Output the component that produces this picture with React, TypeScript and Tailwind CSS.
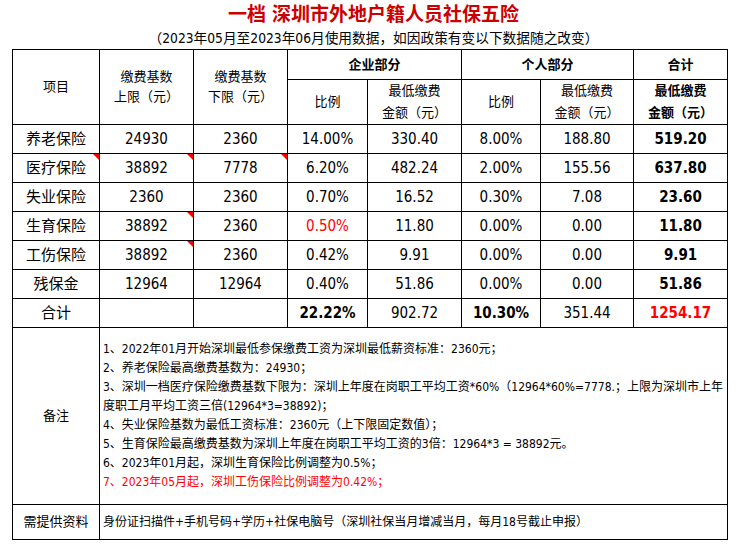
import React from "react";

const font = "font-['DejaVu_Sans_Condensed','Liberation_Sans','Noto_Sans_CJK_SC',sans-serif]";

type Row = {
  name: string;
  upper: string;
  lower: string;
  coRate: string;
  coAmt: string;
  pRate: string;
  pAmt: string;
  total: string;
  marks?: number[];
  redRate?: boolean;
};

const rows: Row[] = [
  { name: "养老保险", upper: "24930", lower: "2360", coRate: "14.00%", coAmt: "330.40", pRate: "8.00%", pAmt: "188.80", total: "519.20" },
  { name: "医疗保险", upper: "38892", lower: "7778", coRate: "6.20%", coAmt: "482.24", pRate: "2.00%", pAmt: "155.56", total: "637.80", marks: [0, 1, 2] },
  { name: "失业保险", upper: "2360", lower: "2360", coRate: "0.70%", coAmt: "16.52", pRate: "0.30%", pAmt: "7.08", total: "23.60" },
  { name: "生育保险", upper: "38892", lower: "2360", coRate: "0.50%", coAmt: "11.80", pRate: "0.00%", pAmt: "0.00", total: "11.80", marks: [1], redRate: true },
  { name: "工伤保险", upper: "38892", lower: "2360", coRate: "0.42%", coAmt: "9.91", pRate: "0.00%", pAmt: "0.00", total: "9.91", marks: [1] },
  { name: "残保金", upper: "12964", lower: "12964", coRate: "0.40%", coAmt: "51.86", pRate: "0.00%", pAmt: "0.00", total: "51.86" },
];

const notes = [
  "1、2022年01月开始深圳最低参保缴费工资为深圳最低薪资标准：2360元；",
  "2、养老保险最高缴费基数为：24930；",
  "3、深圳一档医疗保险缴费基数下限为：深圳上年度在岗职工平均工资*60%（12964*60%=7778.；上限为深圳市上年度职工月平均工资三倍(12964*3=38892)；",
  "4、失业保险基数为最低工资标准：2360元（上下限固定数值）；",
  "5、生育保险最高缴费基数为深圳上年度在岗职工平均工资的3倍：12964*3 = 38892元。",
  "6、2023年01月起，深圳生育保险比例调整为0.5%；",
];

function Mark() {
  return (
    <span className="absolute right-0 top-0 w-0 h-0 border-t-[6px] border-t-[#ff0000] border-l-[6px] border-l-transparent" />
  );
}

const td = "border border-black text-center relative p-0";

export default function App() {
  return (
    <div className={`bg-white w-[747px] h-[549px] text-black ${font}`}>
      <h1 className="mt-[2px] h-[24px] leading-[24px] text-center text-[19px] font-bold text-[#cc0000]">
        一档 深圳市外地户籍人员社保五险
      </h1>
      <p className="mt-[2px] h-[20px] leading-[20px] text-center text-[13.7px]">
        （2023年05月至2023年06月使用数据，如因政策有变以下数据随之改变）
      </p>
      <table className="ml-[12px] mt-[1px] w-[715px] table-fixed border-collapse">
        <colgroup>
          <col className="w-[87px]" />
          <col className="w-[94px]" />
          <col className="w-[94px]" />
          <col className="w-[80px]" />
          <col className="w-[94px]" />
          <col className="w-[79px]" />
          <col className="w-[93px]" />
          <col className="w-[94px]" />
        </colgroup>
        <tbody>
          <tr className="h-[30px] text-[13px]">
            <td rowSpan={2} className={td}>项目</td>
            <td rowSpan={2} className={`${td} leading-[20px]`}>
              缴费基数<br />上限（元）
            </td>
            <td rowSpan={2} className={`${td} leading-[20px]`}>
              缴费基数<br />下限（元）
            </td>
            <td colSpan={2} className={`${td} font-bold`}>企业部分</td>
            <td colSpan={2} className={`${td} font-bold`}>个人部分</td>
            <td className={`${td} font-bold`}>合计</td>
          </tr>
          <tr className="h-[44px] text-[13px] leading-[22px]">
            <td className={td}>比例</td>
            <td className={td}>
              最低缴费<br />金额（元）
            </td>
            <td className={td}>比例</td>
            <td className={td}>
              最低缴费<br />金额（元）
            </td>
            <td className={`${td} font-bold`}>
              最低缴费<br />金额（元）
            </td>
          </tr>
          {rows.map((r) => (
            <tr key={r.name} className="h-[29px] text-[15px]">
              <td className={td}>
                {r.name}
                {r.marks?.includes(0) && <Mark />}
              </td>
              <td className={td}>
                {r.upper}
                {r.marks?.includes(1) && <Mark />}
              </td>
              <td className={td}>
                {r.lower}
                {r.marks?.includes(2) && <Mark />}
              </td>
              <td className={`${td} ${r.redRate ? "text-[#ff0000]" : ""}`}>{r.coRate}</td>
              <td className={td}>{r.coAmt}</td>
              <td className={td}>{r.pRate}</td>
              <td className={td}>{r.pAmt}</td>
              <td className={`${td} font-bold`}>{r.total}</td>
            </tr>
          ))}
          <tr className="h-[29px] text-[15px]">
            <td className={td}>合计</td>
            <td className={td}></td>
            <td className={td}></td>
            <td className={`${td} font-bold`}>22.22%</td>
            <td className={td}>902.72</td>
            <td className={`${td} font-bold`}>10.30%</td>
            <td className={td}>351.44</td>
            <td className={`${td} font-bold text-[#ff0000]`}>1254.17</td>
          </tr>
          <tr className="h-[177px]">
            <td className={`${td} text-[13px]`}>备注</td>
            <td colSpan={7} className="border border-black text-left text-[12px] leading-[19px] pl-[3px] pr-0 py-0 break-all">
              {notes.map((n) => (
                <div key={n}>{n}</div>
              ))}
              <div className="text-[#ff0000]">7、2023年05月起，深圳工伤保险比例调整为0.42%；</div>
            </td>
          </tr>
          <tr className="h-[35px]">
            <td className={`${td} text-[13px]`}>需提供资料</td>
            <td colSpan={7} className="border border-black text-left text-[12px] pl-[3px]">
              身份证扫描件+手机号码+学历+社保电脑号（深圳社保当月增减当月，每月18号截止申报）
            </td>
          </tr>
        </tbody>
      </table>
    </div>
  );
}
